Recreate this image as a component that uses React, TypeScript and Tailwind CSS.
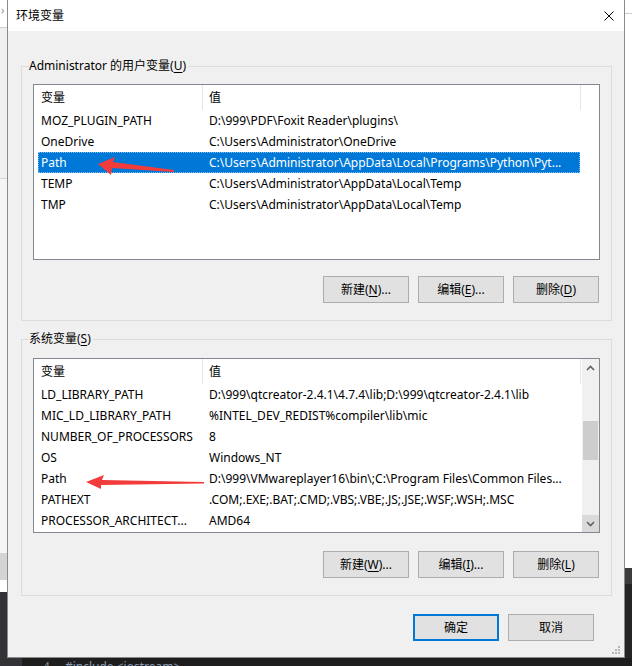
import React from "react";

const FONT = "font-['Noto_Sans','Noto_Sans_CJK_SC',sans-serif]";

function U({ c }: { c: string }) {
  return <span className="underline underline-offset-[2px] decoration-[1px]">{c}</span>;
}

function Btn({ children, primary }: { children: React.ReactNode; primary?: boolean }) {
  return (
    <div
      className={
        primary
          ? "w-[86px] h-[27px] flex items-center justify-center bg-[#e1e1e1] border-2 border-[#0078d7] text-[12px] text-black"
          : "w-[86px] h-[27px] flex items-center justify-center bg-[#e1e1e1] border border-[#adadad] text-[12px] text-black"
      }
    >
      {children}
    </div>
  );
}

type Row = { name: string; value: string };

function Chevron({ up }: { up?: boolean }) {
  return (
    <svg width="9" height="6" viewBox="0 0 9 6">
      <polyline
        points={up ? "1,5 4.5,1.5 8,5" : "1,1 4.5,4.5 8,1"}
        fill="none"
        stroke="#606060"
        strokeWidth="1.6"
      />
    </svg>
  );
}

function ListBox({
  rows,
  selected,
  scroll,
  heightClass,
}: {
  rows: Row[];
  selected?: number;
  scroll?: boolean;
  heightClass: string;
}) {
  return (
    <div className={`${heightClass} border border-[#828790] bg-white flex overflow-hidden`}>
      <div className="flex-1 flex flex-col overflow-hidden">
        <div className="h-[25px] flex shrink-0">
          <div className="w-[169px] h-full border-r border-[#e5e5e5] pl-[7px] flex items-center text-[12px] text-black">
            变量
          </div>
          <div className="w-[378px] h-full border-r border-[#e5e5e5] pl-[6px] flex items-center text-[12px] text-black">
            值
          </div>
        </div>
        {rows.map((r, i) => (
          <div key={i} className="h-[21px] flex shrink-0">
            <div
              className={
                i === selected
                  ? "ml-[4px] w-[542px] h-full flex items-center bg-[#0078d7] text-white outline outline-1 outline-dotted outline-[#7fb8ea] -outline-offset-1"
                  : "ml-[4px] w-[542px] h-full flex items-center text-black"
              }
            >
              <div className="w-[165px] pl-[3px] whitespace-nowrap overflow-hidden text-[12px]">{r.name}</div>
              <div className="flex-1 pl-[6px] whitespace-nowrap overflow-hidden text-[12px]">{r.value}</div>
            </div>
          </div>
        ))}
      </div>
      {scroll && (
        <div className="w-[17px] h-full flex flex-col bg-[#f0f0f0] shrink-0">
          <div className="h-[17px] flex items-center justify-center">
            <Chevron up />
          </div>
          <div className="flex-1 px-[1px]">
            <div className="mt-[45px] h-[39px] bg-[#cdcdcd]" />
          </div>
          <div className="h-[17px] flex items-center justify-center bg-[#dadada]">
            <Chevron />
          </div>
        </div>
      )}
    </div>
  );
}

function Group({
  label,
  className,
  children,
}: {
  label: React.ReactNode;
  className: string;
  children: React.ReactNode;
}) {
  return (
    <div className={`relative border border-[#dcdcdc] ${className}`}>
      <div className="absolute left-[7px] top-[-9px] bg-[#f0f0f0] pr-[2px] text-[12px] leading-[16px] text-black whitespace-nowrap">
        {label}
      </div>
      {children}
    </div>
  );
}

const userRows: Row[] = [
  { name: "MOZ_PLUGIN_PATH", value: "D:\\999\\PDF\\Foxit Reader\\plugins\\" },
  { name: "OneDrive", value: "C:\\Users\\Administrator\\OneDrive" },
  { name: "Path", value: "C:\\Users\\Administrator\\AppData\\Local\\Programs\\Python\\Pyt..." },
  { name: "TEMP", value: "C:\\Users\\Administrator\\AppData\\Local\\Temp" },
  { name: "TMP", value: "C:\\Users\\Administrator\\AppData\\Local\\Temp" },
];

const sysRows: Row[] = [
  { name: "LD_LIBRARY_PATH", value: "D:\\999\\qtcreator-2.4.1\\4.7.4\\lib;D:\\999\\qtcreator-2.4.1\\lib" },
  { name: "MIC_LD_LIBRARY_PATH", value: "%INTEL_DEV_REDIST%compiler\\lib\\mic" },
  { name: "NUMBER_OF_PROCESSORS", value: "8" },
  { name: "OS", value: "Windows_NT" },
  { name: "Path", value: "D:\\999\\VMwareplayer16\\bin\\;C:\\Program Files\\Common Files..." },
  { name: "PATHEXT", value: ".COM;.EXE;.BAT;.CMD;.VBS;.VBE;.JS;.JSE;.WSF;.WSH;.MSC" },
  { name: "PROCESSOR_ARCHITECT...", value: "AMD64" },
];

export default function App() {
  return (
    <div className={`${FONT} relative w-[632px] h-[666px] overflow-hidden flex flex-col bg-[#1e1e1e]`}>
      <div className="flex h-[658px] shrink-0">
        {/* left background strip */}
        <div className="w-[7px] h-full flex flex-col shrink-0">
          <div className="h-[27px] bg-white text-[#909090] text-[11px] leading-[20px] pl-[1px]">›</div>
          <div className="h-px bg-[#d0d0d0]" />
          <div className="h-[150px] bg-[#f0f0f0]" />
          <div className="h-px bg-[#d6d6d6]" />
          <div className="h-[374px] bg-[#f5f5f5]" />
          <div className="h-[27px] bg-[#d4d4d4]" />
          <div className="h-[12px] bg-white" />
          <div className="h-[66px] bg-[#333337]" />
        </div>

        {/* dialog */}
        <div className="relative w-[618px] h-full border-x border-b border-[#8a8a8a] bg-[#f0f0f0] flex flex-col shrink-0">
          <div className="h-[31px] bg-white flex items-center justify-between pl-[8px] pr-[10px] shrink-0">
            <span className="text-[12px] text-black">环境变量</span>
            <svg width="10" height="10" viewBox="0 0 10 10">
              <path d="M0.5 0.5 L9.5 9.5 M9.5 0.5 L0.5 9.5" stroke="#000" strokeWidth="1" />
            </svg>
          </div>
          <div className="pl-[13px] pr-[12px] pt-[35px] flex flex-col">
            <Group
              className="h-[255px] pt-[17px] px-[11px]"
              label={
                <>
                  Administrator 的用户变量(<U c="U" />)
                </>
              }
            >
              <ListBox rows={userRows} selected={2} heightClass="h-[176px]" />
              <div className="mt-[16px] mr-[1px] flex justify-end gap-[9px]">
                <Btn>
                  新建(<U c="N" />)...
                </Btn>
                <Btn>
                  编辑(<U c="E" />)...
                </Btn>
                <Btn>
                  删除(<U c="D" />)
                </Btn>
              </div>
            </Group>

            <Group
              className="mt-[18px] h-[257px] pt-[18px] px-[11px]"
              label={
                <>
                  系统变量(<U c="S" />)
                </>
              }
            >
              <ListBox rows={sysRows} scroll heightClass="h-[175px]" />
              <div className="mt-[18px] mr-[1px] flex justify-end gap-[9px]">
                <Btn>
                  新建(<U c="W" />)...
                </Btn>
                <Btn>
                  编辑(<U c="I" />)...
                </Btn>
                <Btn>
                  删除(<U c="L" />)
                </Btn>
              </div>
            </Group>

            <div className="mt-[18px] pr-[18px] flex justify-end gap-[9px]">
              <Btn primary>确定</Btn>
              <Btn>取消</Btn>
            </div>
          </div>

          {/* size grip */}
          <svg className="absolute right-[3px] bottom-[2px]" width="9" height="9" viewBox="0 0 9 9">
            <rect x="6" y="0" width="2" height="2" fill="#b5b5b5" />
            <rect x="3" y="3" width="2" height="2" fill="#b5b5b5" />
            <rect x="6" y="3" width="2" height="2" fill="#b5b5b5" />
            <rect x="0" y="6" width="2" height="2" fill="#b5b5b5" />
            <rect x="3" y="6" width="2" height="2" fill="#b5b5b5" />
            <rect x="6" y="6" width="2" height="2" fill="#b5b5b5" />
          </svg>
        </div>

        {/* right background strip */}
        <div className="w-[7px] h-full flex flex-col shrink-0">
          <div className="h-[13px] bg-white" />
          <div className="h-px bg-[#cccccc]" />
          <div className="h-[554px] bg-white" />
          <div className="h-[16px] bg-[#3c3c3c]" />
          <div className="h-[74px] bg-[#252526]" />
        </div>
      </div>

      {/* bottom background strip */}
      <div className="h-[8px] flex overflow-hidden">
        <div className="w-[22px] bg-[#333337]" />
        <div className="flex-1 flex items-start pt-[3px] text-[12px] leading-[12px] whitespace-nowrap">
          <span className="ml-[21px] text-[#858585]">4</span>
          <span className="ml-[15px] text-[#8a9bb5]">#include &lt;iostream&gt;</span>
        </div>
      </div>

      {/* red annotation arrows */}
      <svg className="absolute left-0 top-0 pointer-events-none" width="632" height="666" viewBox="0 0 632 666">
        <polygon
          points="98,164 115,157 113,162 174,170 174,172 112,168 111,175"
          fill="#f23c3c"
        />
        <polygon
          points="86,482 104,475 102,480 204,482 204,483.5 101,485 101,489"
          fill="#f23c3c"
        />
      </svg>
    </div>
  );
}
